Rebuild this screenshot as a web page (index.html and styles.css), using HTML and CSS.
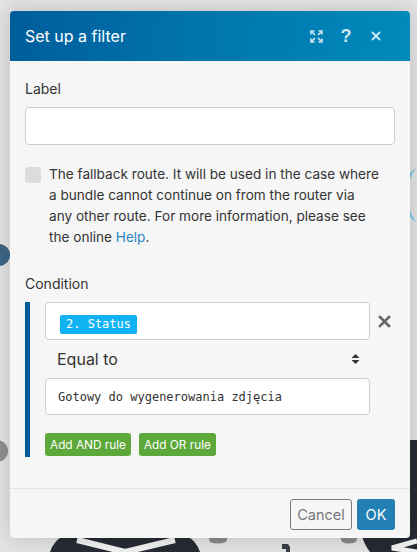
FILE: index.html
```html
<!DOCTYPE html>
<html lang="en">
<head>
<meta charset="utf-8">
<title>Set up a filter</title>
<link rel="stylesheet" href="styles.css">
</head>
<body>
<div class="canvas">
  <div class="deco deco-node-blue"></div>
  <div class="deco deco-node-gray"></div>
  <div class="deco deco-arc"></div>
  <div class="deco deco-dark-edge"></div>
  <svg class="deco deco-bottom" width="417" height="16" viewBox="0 0 417 16">
    <path d="M50 16 Q54 4 64 0 H186 Q196 4 200 16 Z" fill="#262b33"/>
    <path d="M77 4 L125 16 L175 4" fill="none" stroke="#f2f2f2" stroke-width="6"/>
    <path d="M208 0 H228 L226 6 Q218 9 210 6 Z" fill="#8a8a8a"/>
    <path d="M282 8 h6 l2 3 v5 h-4 v-3 h-4 z" fill="#3a3f47"/>
    <path d="M340 0 H358 L356 6 Q348 9 342 6 Z" fill="#8a8a8a"/>
    <path d="M362 0 H417 V16 H370 Q364 8 362 0 Z" fill="#262b33"/>
    <path d="M417 5 L392 12 L417 16" fill="none" stroke="#f2f2f2" stroke-width="5"/>
  </svg>

  <div class="modal">
    <div class="modal-header">
      <h1 class="modal-title">Set up a filter</h1>
      <div class="header-tools">
        <span class="tool">
          <svg width="13" height="13" viewBox="0 0 13 13" fill="none" stroke="currentColor" stroke-width="1.6">
            <path d="M2 2 L5 5 M11 2 L8 5 M2 11 L5 8 M11 11 L8 8"/>
            <path d="M1 4.5 V1 H4.5 M8.5 1 H12 V4.5 M1 8.5 V12 H4.5 M8.5 12 H12 V8.5"/>
          </svg>
        </span>
        <span class="tool tool-q">?</span>
        <span class="tool">
          <svg width="10" height="10" viewBox="0 0 10 10" stroke="currentColor" stroke-width="1.8">
            <path d="M1 1 L9 9 M9 1 L1 9"/>
          </svg>
        </span>
      </div>
    </div>

    <div class="modal-body">
      <label class="field-label">Label</label>
      <div class="text-input"></div>

      <div class="fallback">
        <span class="checkbox"></span>
        <p class="fallback-text">The fallback route. It will be used in the case where<br>a bundle cannot continue on from the router via<br>any other route. For more information, please see<br>the online <a class="link">Help</a>.</p>
      </div>

      <label class="field-label condition-label">Condition</label>
      <div class="condition">
        <div class="rule-row">
          <div class="rule-input">
            <span class="pill">2. Status</span>
          </div>
          <span class="remove">
            <svg width="13" height="13" viewBox="0 0 13 13" stroke="currentColor" stroke-width="2.6" stroke-linecap="square">
              <path d="M2 2 L11 11 M11 2 L2 11"/>
            </svg>
          </span>
        </div>
        <div class="operator">
          <span>Equal to</span>
          <svg class="sort" width="9" height="12" viewBox="0 0 9 12" fill="currentColor">
            <path d="M4.5 1 L8.5 5 H0.5 Z M4.5 11 L8.5 7 H0.5 Z"/>
          </svg>
        </div>
        <div class="rule-input value-input">Gotowy do wygenerowania zdjęcia</div>
        <div class="rule-actions">
          <button class="btn-green">Add AND rule</button>
          <button class="btn-green">Add OR rule</button>
        </div>
      </div>
    </div>

    <div class="modal-footer">
      <button class="btn btn-cancel">Cancel</button>
      <button class="btn btn-ok">OK</button>
    </div>
  </div>
</div>
</body>
</html>
```

FILE: styles.css
```css
* { box-sizing: border-box; }
html, body { margin: 0; padding: 0; }
body {
  background: #e4e4e4;
  font-family: Inter, "Liberation Sans", sans-serif;
  color: #333;
  width: 417px;
  height: 552px;
  overflow: hidden;
}
.canvas {
  position: relative;
  width: 417px;
  height: 552px;
  padding: 11px 7px 0 10px;
  overflow: hidden;
}
.deco { position: absolute; }
.deco-node-blue {
  left: -12px; top: 244px; width: 22px; height: 22px;
  border-radius: 50%; background: #3d6585;
}
.deco-node-gray {
  left: -14px; top: 440px; width: 22px; height: 22px;
  border-radius: 50%; background: #8f8f8f;
}
.deco-arc {
  left: 404px; top: 168px; width: 30px; height: 54px;
  border-radius: 50%; border-left: 4px solid #6cc6ec;
}
.deco-dark-edge {
  left: 408px; top: 440px; width: 9px; height: 112px;
  background: #262b33;
}
.deco-bottom {
  left: 0; top: 536px;
}

.modal {
  position: relative;
  width: 400px;
  background: #f6f6f6;
  border-radius: 4px;
  box-shadow: 0 0 22px rgba(0,0,0,0.18);
  overflow: hidden;
}
.modal-header {
  height: 50px;
  display: flex;
  align-items: center;
  justify-content: space-between;
  padding: 0 19px 0 15px;
  background: linear-gradient(100deg, #005d9c 0%, #0078b0 55%, #008aba 100%);
  color: #fff;
}
.modal-title {
  margin: 0;
  font-size: 16px;
  font-weight: 400;
}
.header-tools {
  display: flex;
  align-items: center;
  color: #cfe7f3;
}
.tool {
  display: flex;
  align-items: center;
  justify-content: center;
  width: 30px;
  height: 20px;
}
.tool-q {
  font-weight: 700;
  font-size: 18px;
  font-family: "Liberation Sans", sans-serif;
}

.modal-body {
  padding: 18px 15px 31px 15px;
}
.field-label {
  display: block;
  font-size: 14px;
  line-height: 20px;
  color: #333;
}
.text-input {
  margin-top: 8px;
  height: 38px;
  background: #fff;
  border: 1px solid #cdcdcd;
  border-radius: 4px;
}
.fallback {
  display: flex;
  gap: 8px;
  margin-top: 19px;
}
.checkbox {
  flex: none;
  width: 16px;
  height: 16px;
  margin-top: 3px;
  background: #dcdcdc;
  border-radius: 3px;
}
.fallback-text {
  margin: 0;
  font-size: 13.6px;
  line-height: 21px;
  color: #333;
  white-space: nowrap;
}
.link { color: #2a87bf; }
.condition-label { margin-top: 26px; }
.condition {
  margin-top: 8px;
  border-left: 5px solid #005b9b;
  padding-left: 15px;
}
.rule-row {
  display: flex;
  align-items: center;
  gap: 8px;
}
.rule-input {
  flex: none;
  width: 325px;
  height: 38px;
  background: #fff;
  border: 1px solid #cdcdcd;
  border-radius: 4px;
  padding: 9px 14px;
}
.pill {
  display: inline-block;
  height: 19px;
  line-height: 19px;
  padding: 0 6px;
  background: #10b2f1;
  color: #fff;
  border-radius: 2px;
  font-family: "DejaVu Sans Mono", monospace;
  font-size: 12px;
}
.remove {
  display: flex;
  color: #666;
}
.operator {
  width: 325px;
  height: 38px;
  display: flex;
  align-items: center;
  justify-content: space-between;
  padding: 0 10px 0 12px;
  font-size: 16px;
  color: #333;
}
.sort { color: #333; }
.value-input {
  height: 37px;
  padding: 9px 12px;
  font-family: "DejaVu Sans Mono", monospace;
  font-size: 12px;
  line-height: 18px;
  color: #333;
}
.rule-actions {
  display: flex;
  gap: 8px;
  margin-top: 18px;
  padding-bottom: 1px;
}
.btn-green {
  height: 23px;
  padding: 0 5px;
  border: 0;
  border-radius: 3px;
  background: #5da83a;
  color: #fff;
  font-family: Inter, "Liberation Sans", sans-serif;
  font-size: 11.8px;
}
.modal-footer {
  border-top: 1px solid #e4e4e4;
  display: flex;
  justify-content: flex-end;
  gap: 5px;
  padding: 10px 15px 8px;
}
.btn {
  height: 31px;
  border-radius: 3px;
  font-family: Inter, "Liberation Sans", sans-serif;
  font-size: 14.5px;
}
.btn-cancel {
  width: 62px;
  border: 1px solid #7a7a7a;
  color: #777;
  background: #f6f6f6;
}
.btn-ok {
  width: 38px;
  border: 0;
  background: #2280b4;
  color: #fff;
}
```
